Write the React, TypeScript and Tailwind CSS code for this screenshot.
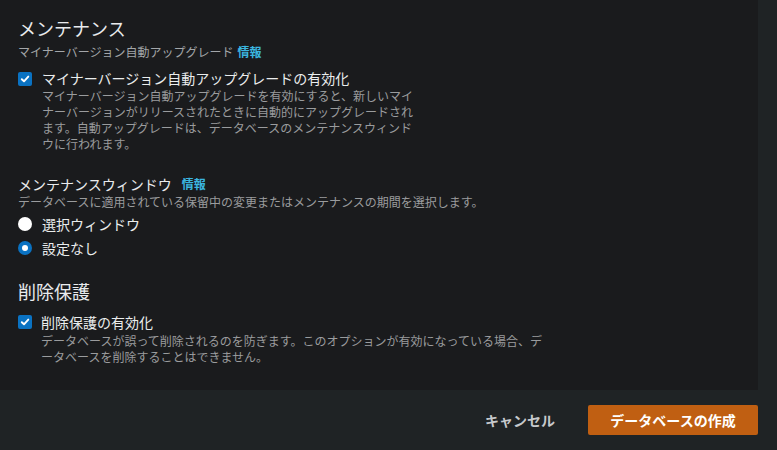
import React, { useState } from 'react';

const font = { fontFamily: '"Noto Sans CJK JP", "Noto Sans", sans-serif' };

// Small checkbox matching the dark console style
const CheckBox: React.FC<{ checked: boolean; onChange: () => void }> = ({ checked, onChange }) => (
  <span
    onClick={onChange}
    className={`flex h-[14px] w-[14px] shrink-0 cursor-pointer items-center justify-center rounded-[2px] ${
      checked ? 'bg-[#0a72c2]' : 'border border-[#8d99a8] bg-transparent'
    }`}
  >
    {checked && (
      <svg width="10" height="10" viewBox="0 0 10 10" fill="none">
        <path d="M1.8 5.2 L4 7.3 L8.3 2.6" stroke="white" strokeWidth="1.9" strokeLinecap="round" strokeLinejoin="round" />
      </svg>
    )}
  </span>
);

const Radio: React.FC<{ checked: boolean; onChange: () => void }> = ({ checked, onChange }) => (
  <span
    onClick={onChange}
    className={`flex h-[14px] w-[14px] shrink-0 cursor-pointer items-center justify-center rounded-full ${
      checked ? 'bg-[#0a72c2]' : 'bg-white'
    }`}
  >
    {checked && <span className="h-[6px] w-[6px] rounded-full bg-white" />}
  </span>
);

const Info: React.FC = () => (
  <span className="ml-[4px] text-[12px] font-bold text-[#3bb6e0]">情報</span>
);

const App: React.FC = () => {
  const [autoUpgrade, setAutoUpgrade] = useState(true);
  const [windowOpt, setWindowOpt] = useState<'select' | 'none'>('none');
  const [protection, setProtection] = useState(true);

  return (
    <div className="flex h-[450px] w-[777px] flex-col bg-[#1f2325]" style={font}>
      {/* Card */}
      <div className="mr-[19px] h-[390px] bg-[#1a1b1d] pl-[18px] pt-[16px]">
        <h2 className="text-[18px] leading-[24px] text-[#e9ebed]">メンテナンス</h2>
        <p className="mt-[4px] text-[12px] leading-[16px] text-[#a3a6a9]">
          マイナーバージョン自動アップグレード
          <Info />
        </p>

        <div className="mt-[9px] flex gap-[10px]">
          <div className="pt-[3px]">
            <CheckBox checked={autoUpgrade} onChange={() => setAutoUpgrade(!autoUpgrade)} />
          </div>
          <div>
            <div className="text-[14px] leading-[19px] text-[#eaeded]">
              マイナーバージョン自動アップグレードの有効化
            </div>
            <p className="w-[380px] text-[12px] leading-[16px] text-[#9a9c9e]">
              マイナーバージョン自動アップグレードを有効にすると、新しいマイナーバージョンがリリースされたときに自動的にアップグレードされます。自動アップグレードは、データベースのメンテナンスウィンドウに行われます。
            </p>
          </div>
        </div>

        <div className="mt-[21px] flex items-center text-[14px] leading-[20px] text-[#e9ebed]">
          メンテナンスウィンドウ
          <span className="ml-[6px]">
            <Info />
          </span>
        </div>
        <p className="text-[12px] leading-[16px] text-[#9a9c9e]">
          データベースに適用されている保留中の変更またはメンテナンスの期間を選択します。
        </p>
        <div className="mt-[4px] flex flex-col gap-[4px]">
          <label className="flex items-center gap-[10px] text-[14px] leading-[20px] text-[#eaeded]">
            <Radio checked={windowOpt === 'select'} onChange={() => setWindowOpt('select')} />
            選択ウィンドウ
          </label>
          <label className="flex items-center gap-[10px] text-[14px] leading-[20px] text-[#eaeded]">
            <Radio checked={windowOpt === 'none'} onChange={() => setWindowOpt('none')} />
            設定なし
          </label>
        </div>

        <h2 className="mt-[21px] text-[18px] leading-[24px] text-[#e9ebed]">削除保護</h2>
        <div className="mt-[10px] flex gap-[9px]">
          <div className="pt-[2px]">
            <CheckBox checked={protection} onChange={() => setProtection(!protection)} />
          </div>
          <div>
            <div className="text-[14px] leading-[18px] text-[#eaeded]">削除保護の有効化</div>
            <p className="mt-[2px] w-[510px] text-[12px] leading-[16px] text-[#9a9c9e]">
              データベースが誤って削除されるのを防ぎます。このオプションが有効になっている場合、データベースを削除することはできません。
            </p>
          </div>
        </div>
      </div>

      {/* Footer actions */}
      <div className="flex flex-1 items-center justify-end pr-[19px]">
        <button className="px-[16px] text-[14px] font-bold text-[#c6c9cc]">キャンセル</button>
        <button className="ml-[17px] h-[30px] w-[170px] rounded-[2px] bg-[#c05f12] text-[14px] font-bold text-white">
          データベースの作成
        </button>
      </div>
    </div>
  );
};

export default App;
